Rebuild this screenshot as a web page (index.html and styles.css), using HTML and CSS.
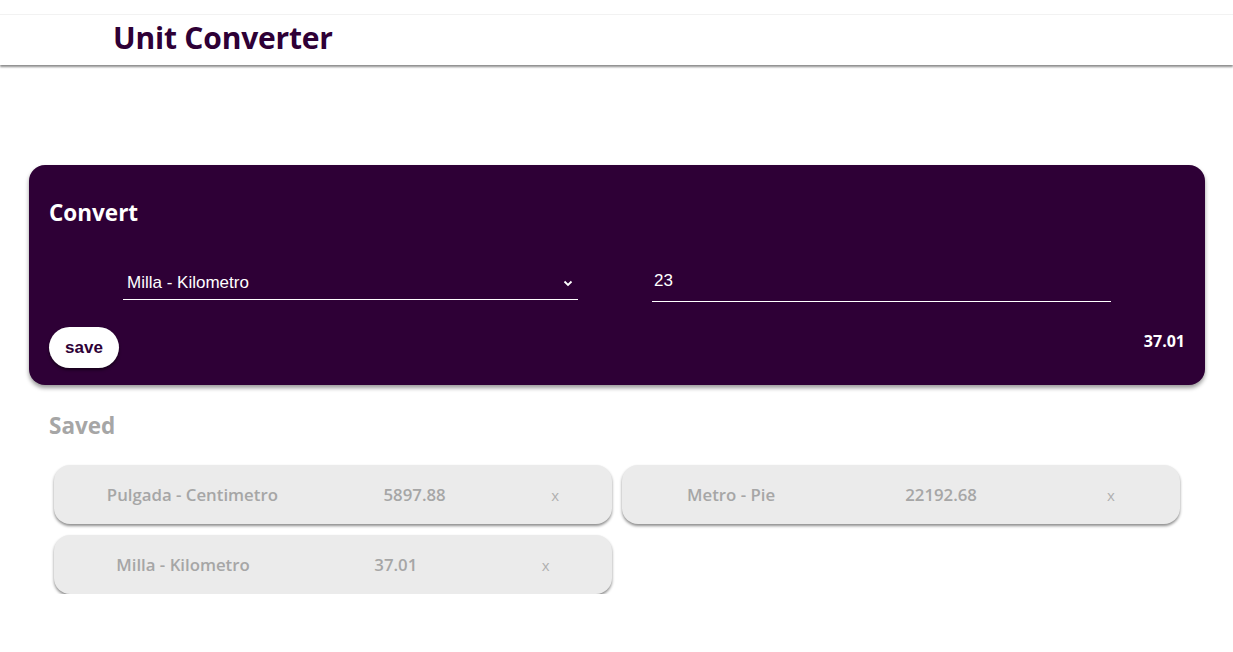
FILE: index.html
```html
<!DOCTYPE html>
<html lang="es">
<head>
<meta charset="utf-8">
<title>Unit Converter</title>
<link rel="stylesheet" href="styles.css">
</head>
<body>
<header class="topbar">
  <h1 class="brand">Unit Converter</h1>
</header>
<main class="page">
  <section class="convert-card">
    <h2 class="convert-title">Convert</h2>
    <div class="fields">
      <div class="select-field">
        <span class="select-text">Milla - Kilometro</span>
        <svg class="chevron" width="10" height="7" viewBox="0 0 10 7"><path d="M1.5 1.5 L5 5 L8.5 1.5" fill="none" stroke="#fff" stroke-width="1.8"/></svg>
      </div>
      <div class="input-field"><span class="input-text">23</span></div>
    </div>
    <div class="actions">
      <button class="save-btn">save</button>
      <span class="result">37.01</span>
    </div>
  </section>
  <h2 class="saved-title">Saved</h2>
  <div class="saved-grid">
    <div class="saved-item"><span class="si-name">Pulgada - Centimetro</span><span class="si-val">5897.88</span><span class="si-x">x</span></div>
    <div class="saved-item"><span class="si-name">Metro - Pie</span><span class="si-val">22192.68</span><span class="si-x">x</span></div>
    <div class="saved-item"><span class="si-name">Milla - Kilometro</span><span class="si-val">37.01</span><span class="si-x">x</span></div>
  </div>
</main>
</body>
</html>
```
FILE: styles.css
```css
* { box-sizing: border-box; }
body {
  margin: 0;
  background: #fff;
  font-family: "Open Sans", "Noto Sans", sans-serif;
}
.topbar {
  margin-top: 14px;
  height: 51px;
  border-top: 1px solid #f2f2f2;
  box-shadow: 0 2px 2px rgba(0,0,0,0.45);
  padding-left: 113px;
  padding-bottom: 5px;
  display: flex;
  align-items: center;
}
.brand {
  margin: 0;
  font-size: 30px;
  font-weight: 700;
  color: #2e0036;
  letter-spacing: -0.2px;
  line-height: 36px;
}
.page {
  padding: 100px 28px 0 29px;
}
.convert-card {
  background: #2e0036;
  border-radius: 16px;
  box-shadow: 0 3px 4px rgba(0,0,0,0.4);
  padding: 34px 20px 17px 20px;
  height: 220px;
  display: flex;
  flex-direction: column;
}
.convert-title {
  margin: 0;
  color: #fff;
  font-size: 22.5px;
  font-weight: 700;
  line-height: 28px;
}
.fields {
  display: flex;
  margin-top: 36px;
  padding-left: 74px;
  gap: 74px;
}
.select-field {
  width: 455px;
  height: 37px;
  border-bottom: 1px solid #fff;
  display: flex;
  align-items: center;
  justify-content: space-between;
  padding: 4px 5px 0 4px;
}
.select-text, .input-text {
  font-family: "Liberation Sans", Arial, sans-serif;
  color: #fff;
  font-size: 17px;
}
.input-field {
  width: 459px;
  height: 39px;
  border-bottom: 1px solid #fff;
  padding: 0 0 2px 2px;
  display: flex;
  align-items: center;
}
.actions {
  margin-top: auto;
  display: flex;
  justify-content: space-between;
  align-items: center;
}
.save-btn {
  width: 70px;
  height: 41px;
  border: none;
  border-radius: 21px;
  background: #fff;
  color: #2e0036;
  font-family: "Liberation Sans", Arial, sans-serif;
  font-weight: 700;
  font-size: 17px;
  box-shadow: 0 2px 3px rgba(0,0,0,0.5);
  padding: 0;
}
.result {
  color: #fff;
  font-weight: 700;
  font-size: 16px;
  margin-bottom: 14px;
}
.saved-title {
  margin: 26px 0 0 20px;
  color: #a6a6a6;
  font-size: 22.5px;
  font-weight: 700;
  line-height: 30px;
}
.saved-grid {
  display: grid;
  grid-template-columns: 558px 558px;
  gap: 11px 10px;
  margin: 24px 0 0 25px;
}
.saved-item {
  height: 59px;
  background: #ebebeb;
  border-radius: 16px;
  box-shadow: 0 2px 3px rgba(0,0,0,0.45);
  display: flex;
  justify-content: space-around;
  align-items: center;
  color: #a6a6a6;
  font-size: 16.8px;
  font-weight: 600;
}
.si-x {
  font-weight: 400;
  font-size: 15px;
  color: #b0b0b0;
}
```
